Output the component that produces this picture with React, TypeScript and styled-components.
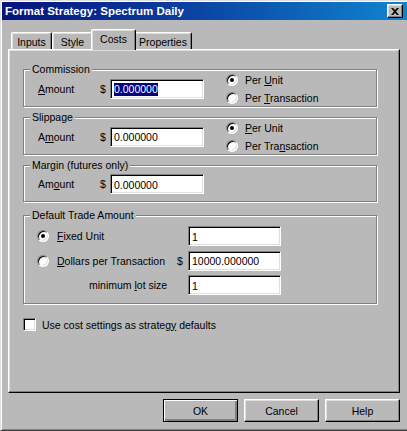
import React from "react";
import styled, { createGlobalStyle, css } from "styled-components";

const FACE = "#b9b9b9";
const FONT = `"Liberation Sans", Arial, sans-serif`;

const GlobalStyle = createGlobalStyle`
  html, body { margin: 0; padding: 0; background: ${FACE}; }
  body { font-family: ${FONT}; font-size: 10.5px; color: #000; }
  * { box-sizing: border-box; }
`;

const Window = styled.div`
  width: 407px;
  height: 431px;
  background: ${FACE};
  border-top: 1px solid #dfdfdf;
  border-left: 1px solid #dfdfdf;
  border-bottom: 1px solid #404040;
  box-shadow: inset 1px 1px 0 #fff, inset 0 -1px 0 #808080;
  padding: 1px 0 1px 1px;
  display: flex;
  flex-direction: column;
`;

const TitleBar = styled.div`
  height: 18px;
  display: flex;
  align-items: center;
  justify-content: space-between;
  padding: 0 4px 0 3px;
  background: linear-gradient(to right, #06147a 0%, #0a3a9c 40%, #1084d0 100%);
  color: #fff;
  font-family: ${FONT};
  font-weight: bold;
  font-size: 11.5px;
  white-space: nowrap;
`;

const CloseButton = styled.div`
  width: 16px;
  height: 14px;
  background: ${FACE};
  border: 1px solid;
  border-color: #fff #000 #000 #fff;
  box-shadow: inset -1px -1px 0 #808080, inset 1px 1px 0 #dfdfdf;
  display: flex;
  align-items: center;
  justify-content: center;
`;

const Content = styled.div`
  flex: 1;
  display: flex;
  flex-direction: column;
  padding: 9px 0 0 6px;
`;

const TabStrip = styled.div`
  height: 20px;
  display: flex;
  align-items: flex-end;
  padding-left: 3px;
  position: relative;
  z-index: 1;
`;

const Tab = styled.div<{ $w: number; $active?: boolean }>`
  width: ${(p) => p.$w}px;
  height: 17px;
  background: ${FACE};
  border-top: 1px solid #fff;
  border-left: 1px solid #fff;
  border-right: 1px solid #000;
  border-radius: 2px 2px 0 0;
  box-shadow: inset -1px 0 0 #808080, inset 1px 1px 0 #dfdfdf;
  display: flex;
  align-items: center;
  justify-content: center;
  font-size: 10.5px;
  padding-top: 1px;
  ${(p) =>
    p.$active &&
    css`
      height: 21px;
      margin: 0 -2px -1px -2px;
      padding-top: 0;
      align-items: flex-start;
      padding-top: 3px;
      position: relative;
      z-index: 2;
    `}
`;

const Panel = styled.div`
  width: 392px;
  height: 344px;
  border: 1px solid;
  border-color: #fff #000 #000 #fff;
  box-shadow: inset -1px -1px 0 #808080, inset 1px 1px 0 #dfdfdf;
  display: flex;
  flex-direction: column;
  padding: 19px 0 0 14px;
`;

const Group = styled.div<{ $pad: string; $mt: number }>`
  position: relative;
  width: 354px;
  margin-top: ${(p) => p.$mt}px;
  border: 1px solid #808080;
  box-shadow: 1px 1px 0 #fff, inset 1px 1px 0 #fff;
  padding: ${(p) => p.$pad};
`;

const Caption = styled.span`
  position: absolute;
  top: -7px;
  left: 6px;
  padding: 0 2px;
  line-height: 13px;
  background: ${FACE};
`;

const AmountRow = styled.div`
  display: grid;
  grid-template-columns: 62px 10px 94px 22px auto;
  align-items: center;
  padding-left: 14px;
`;

const Label = styled.span<{ $pl?: number }>`
  white-space: nowrap;
  padding-left: ${(p) => p.$pl || 0}px;
`;

const Field = styled.div`
  height: 20px;
  background: #fff;
  border: 1px solid;
  border-color: #808080 #fff #fff #808080;
  box-shadow: inset 1px 1px 0 #000, inset -1px -1px 0 #dfdfdf;
  display: flex;
  align-items: center;
  padding: 1px 0 0 3px;
  white-space: nowrap;
`;

const Selected = styled.span`
  background: #000080;
  color: #fff;
  line-height: 13px;
`;

const RadioColumn = styled.div`
  grid-column: 5;
  display: flex;
  flex-direction: column;
  gap: 1px;
`;

const OptionRow = styled.div`
  height: 17px;
  display: flex;
  align-items: center;
  gap: 7px;
  white-space: nowrap;
`;

const RadioDot = styled.span<{ $on?: boolean }>`
  width: 12px;
  height: 12px;
  flex: none;
  border-radius: 50%;
  background: #fff;
  border: 1px solid;
  border-color: #808080 #fff #fff #808080;
  box-shadow: inset 1px 1px 0 #000, inset -1px -1px 0 #dfdfdf;
  display: flex;
  align-items: center;
  justify-content: center;
  &::after {
    content: "";
    width: 4px;
    height: 4px;
    border-radius: 50%;
    background: ${(p) => (p.$on ? "#000" : "transparent")};
  }
`;

const TradeGrid = styled.div`
  display: grid;
  grid-template-columns: 140px 11px 93px;
  grid-auto-rows: 20px;
  row-gap: 4.5px;
  align-items: center;
  padding-left: 13px;
`;

const TradeOption = styled.div`
  display: flex;
  align-items: center;
  gap: 8px;
  white-space: nowrap;
`;

const CheckRow = styled.div`
  margin-top: 14px;
  display: flex;
  align-items: center;
  gap: 6px;
  height: 13px;
`;

const CheckBox = styled.span`
  width: 13px;
  height: 13px;
  background: #fff;
  border: 1px solid;
  border-color: #808080 #fff #fff #808080;
  box-shadow: inset 1px 1px 0 #000, inset -1px -1px 0 #dfdfdf;
`;

const ButtonRow = styled.div`
  width: 392px;
  display: flex;
  justify-content: flex-end;
  gap: 6px;
  margin-top: 6px;
`;

const Button = styled.div<{ $default?: boolean }>`
  width: 75px;
  height: 23px;
  background: ${FACE};
  border: 1px solid;
  border-color: #fff #000 #000 #fff;
  box-shadow: inset -1px -1px 0 #808080, inset 1px 1px 0 #dfdfdf;
  display: flex;
  align-items: center;
  justify-content: center;
  ${(p) =>
    p.$default &&
    css`
      border-color: #000;
      box-shadow: inset 1px 1px 0 #fff, inset -2px -2px 0 #808080,
        inset -1px -1px 0 #000;
    `}
`;

const U = styled.span`
  text-decoration: underline;
  text-underline-offset: 1px;
`;

const Radio: React.FC<{ on?: boolean; children: React.ReactNode }> = ({
  on,
  children,
}) => (
  <OptionRow>
    <RadioDot $on={on} />
    <span>{children}</span>
  </OptionRow>
);

export default function App() {
  return (
    <>
      <GlobalStyle />
      <Window>
        <TitleBar>
          <span>Format Strategy: Spectrum Daily</span>
          <CloseButton>
            <svg width="8" height="7" viewBox="0 0 8 7">
              <path
                d="M0 0h2l2 2 2-2h2L5 3.5 8 7H6L4 5 2 7H0l3-3.5z"
                fill="#000"
              />
            </svg>
          </CloseButton>
        </TitleBar>
        <Content>
          <TabStrip>
            <Tab $w={41}>Inputs</Tab>
            <Tab $w={41}>Style</Tab>
            <Tab $w={45} $active>
              Costs
            </Tab>
            <Tab $w={58}>Properties</Tab>
          </TabStrip>
          <Panel>
            <Group $pad="1px 0 0 0" $mt={0}>
              <Caption>Commission</Caption>
              <AmountRow>
                <Label>
                  <U>A</U>mount
                </Label>
                <Label>$</Label>
                <Field>
                  <Selected>0.000000</Selected>
                </Field>
                <RadioColumn>
                  <Radio on>
                    Per <U>U</U>nit
                  </Radio>
                  <Radio>
                    Per <U>T</U>ransaction
                  </Radio>
                </RadioColumn>
              </AmountRow>
            </Group>

            <Group $pad="1px 0 0 0" $mt={10}>
              <Caption>Slippage</Caption>
              <AmountRow>
                <Label>
                  A<U>m</U>ount
                </Label>
                <Label>$</Label>
                <Field>0.000000</Field>
                <RadioColumn>
                  <Radio on>
                    <U>P</U>er Unit
                  </Radio>
                  <Radio>
                    Per Tra<U>n</U>saction
                  </Radio>
                </RadioColumn>
              </AmountRow>
            </Group>

            <Group $pad="8px 0 7px 0" $mt={10}>
              <Caption>Margin (futures only)</Caption>
              <AmountRow>
                <Label>
                  Am<U>o</U>unt
                </Label>
                <Label>$</Label>
                <Field>0.000000</Field>
              </AmountRow>
            </Group>

            <Group $pad="10px 0 8px 0" $mt={13}>
              <Caption>Default Trade Amount</Caption>
              <TradeGrid>
                <TradeOption>
                  <RadioDot $on />
                  <span>
                    <U>F</U>ixed Unit
                  </span>
                </TradeOption>
                <span />
                <Field>1</Field>
                <TradeOption>
                  <RadioDot />
                  <span>
                    <U>D</U>ollars per Transaction
                  </span>
                </TradeOption>
                <Label>$</Label>
                <Field>10000.000000</Field>
                <Label $pl={52}>
                  minimum <U>l</U>ot size
                </Label>
                <span />
                <Field>1</Field>
              </TradeGrid>
            </Group>

            <CheckRow>
              <CheckBox />
              <span>
                Use cost settings as strateg<U>y</U> defaults
              </span>
            </CheckRow>
          </Panel>
          <ButtonRow>
            <Button $default>OK</Button>
            <Button>Cancel</Button>
            <Button>Help</Button>
          </ButtonRow>
        </Content>
      </Window>
    </>
  );
}
